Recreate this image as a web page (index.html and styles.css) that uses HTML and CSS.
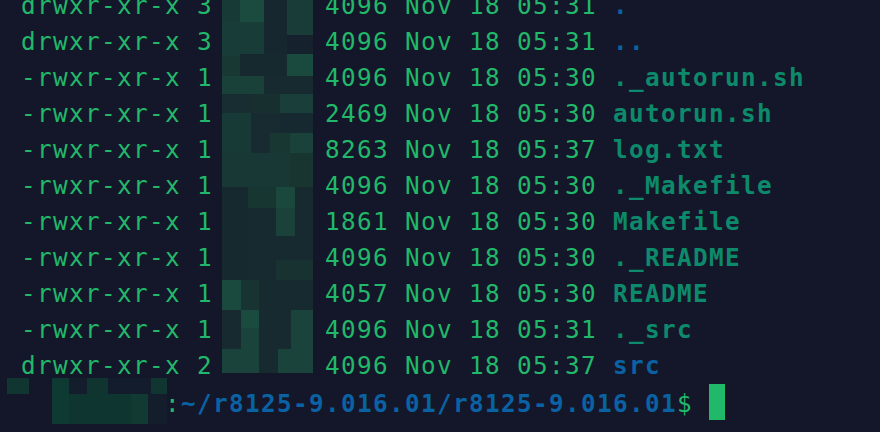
FILE: index.html
```html
<!DOCTYPE html>
<html lang="en">
  <head>
    <meta charset="UTF-8" />
    <meta name="viewport" content="width=device-width, initial-scale=1.0" />
    <title>Terminal</title>
    <link rel="stylesheet" href="styles.css">
  </head>
  <body>
    <div class="term">
      <!-- redacted owner/group column -->
      <svg class="redact-owner" width="91" height="373" viewBox="222 0 91 373">
        <rect x="222" y="0" width="91" height="373" fill="#183834" />
        <rect x="222" y="0" width="18" height="22" fill="#183a36" />
        <rect x="240" y="0" width="24" height="22" fill="#1b4a3e" />
        <rect x="264" y="0" width="23" height="56" fill="#16272f" />
        <rect x="287" y="0" width="26" height="35" fill="#193c39" />
        <rect x="222" y="22" width="42" height="34" fill="#183c37" />
        <rect x="287" y="35" width="26" height="19" fill="#15222e" />
        <rect x="240" y="54" width="47" height="22" fill="#16292f" />
        <rect x="287" y="54" width="26" height="22" fill="#1a4a3e" />
        <rect x="222" y="76" width="42" height="18" fill="#1a4139" />
        <rect x="264" y="76" width="49" height="18" fill="#162a30" />
        <rect x="222" y="94" width="29" height="19" fill="#172d31" />
        <rect x="251" y="94" width="29" height="19" fill="#17302f" />
        <rect x="280" y="94" width="33" height="19" fill="#1a3f3a" />
        <rect x="222" y="113" width="29" height="40" fill="#183a36" />
        <rect x="251" y="113" width="29" height="20" fill="#172b30" />
        <rect x="280" y="113" width="33" height="20" fill="#162830" />
        <rect x="251" y="133" width="19" height="20" fill="#172b30" />
        <rect x="270" y="133" width="20" height="20" fill="#183733" />
        <rect x="290" y="133" width="23" height="20" fill="#1a413a" />
        <rect x="222" y="153" width="68" height="34" fill="#183835" />
        <rect x="290" y="153" width="23" height="34" fill="#183530" />
        <rect x="222" y="187" width="26" height="93" fill="#16292f" />
        <rect x="248" y="187" width="28" height="21" fill="#173531" />
        <rect x="248" y="208" width="28" height="72" fill="#172a30" />
        <rect x="276" y="187" width="19" height="21" fill="#1a483d" />
        <rect x="276" y="208" width="19" height="28" fill="#1a423a" />
        <rect x="295" y="187" width="18" height="49" fill="#162a30" />
        <rect x="276" y="236" width="37" height="24" fill="#172a30" />
        <rect x="276" y="260" width="37" height="20" fill="#173230" />
        <rect x="222" y="280" width="19" height="30" fill="#1a4a3e" />
        <rect x="241" y="280" width="18" height="30" fill="#173432" />
        <rect x="259" y="280" width="54" height="30" fill="#172a30" />
        <rect x="222" y="310" width="19" height="39" fill="#172a30" />
        <rect x="241" y="310" width="18" height="18" fill="#1b4a3f" />
        <rect x="241" y="328" width="18" height="21" fill="#1a433b" />
        <rect x="259" y="310" width="32" height="63" fill="#172a30" />
        <rect x="291" y="310" width="22" height="39" fill="#1a443b" />
        <rect x="222" y="349" width="37" height="24" fill="#1a443b" />
        <rect x="278" y="349" width="35" height="24" fill="#1a443b" />
      </svg>

      <div class="line">drwxr-xr-x 3       4096 Nov 18 05:31 <span class="dir">.</span></div>
      <div class="line">drwxr-xr-x 3       4096 Nov 18 05:31 <span class="dir">..</span></div>
      <div class="line">-rwxr-xr-x 1       4096 Nov 18 05:30 <span class="exec">._autorun.sh</span></div>
      <div class="line">-rwxr-xr-x 1       2469 Nov 18 05:30 <span class="exec">autorun.sh</span></div>
      <div class="line">-rwxr-xr-x 1       8263 Nov 18 05:37 <span class="exec">log.txt</span></div>
      <div class="line">-rwxr-xr-x 1       4096 Nov 18 05:30 <span class="exec">._Makefile</span></div>
      <div class="line">-rwxr-xr-x 1       1861 Nov 18 05:30 <span class="exec">Makefile</span></div>
      <div class="line">-rwxr-xr-x 1       4096 Nov 18 05:30 <span class="exec">._README</span></div>
      <div class="line">-rwxr-xr-x 1       4057 Nov 18 05:30 <span class="exec">README</span></div>
      <div class="line">-rwxr-xr-x 1       4096 Nov 18 05:31 <span class="exec">._src</span></div>
      <div class="line">drwxr-xr-x 2       4096 Nov 18 05:37 <span class="dir">src</span></div>

      <!-- prompt, user@host redacted -->
      <div class="line prompt"><svg class="redact-host" width="160" height="46" viewBox="7 378 160 46"><rect x="7" y="378" width="22" height="16" fill="#113632" /><rect x="52" y="378" width="17" height="46" fill="#0f3a33" /><rect x="69" y="378" width="18" height="16" fill="#141d2c" /><rect x="87" y="378" width="21" height="16" fill="#103530" /><rect x="108" y="378" width="43" height="16" fill="#131c2c" /><rect x="151" y="378" width="16" height="16" fill="#113632" /><rect x="69" y="394" width="62" height="30" fill="#0f3530" /><rect x="131" y="394" width="17" height="30" fill="#113a33" /><rect x="148" y="394" width="19" height="30" fill="#141d2c" /></svg>         :<span class="path">~/r8125-9.016.01/r8125-9.016.01</span>$ <span class="cursor"></span></div>
    </div>
  </body>
</html>
```

FILE: styles.css
```css
body {
  margin: 0;
  background-color: #141729; /* terminal background */
  overflow: hidden;
}
.term {
  position: relative;
  height: 432px;
  padding-left: 21px;
  font-family: "DejaVu Sans Mono", monospace;
  font-size: 24.3px;
  letter-spacing: 1.37px;
  color: #22b86a; /* default green text */
  overflow: hidden;
}
.line {
  position: relative;
  height: 36px;
  line-height: 36px;
  white-space: pre;
  top: -12px;
}
.dir {
  color: #0a62a4;
  font-weight: bold;
}
.exec {
  color: #0d8a6b;
  font-weight: bold;
}
.path {
  color: #0a62a4;
  font-weight: bold;
}
.cursor {
  display: inline-block;
  width: 16px;
  height: 36px;
  background-color: #22b86a;
  vertical-align: -8px;
}
/* redaction blocks drawn over the text */
.redact-owner {
  position: absolute;
  left: 222px;
  top: 0;
  z-index: 1;
}
.redact-host {
  position: absolute;
  left: -14px;
  top: -6px;
}
```
